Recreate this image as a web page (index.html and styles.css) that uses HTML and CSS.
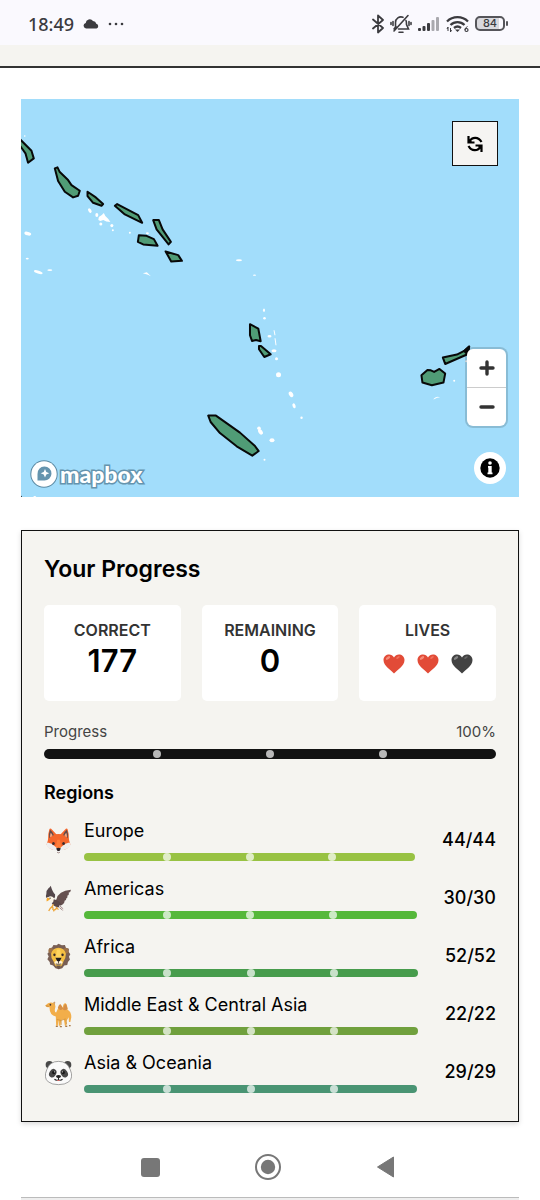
FILE: index.html
```html
<!DOCTYPE html>
<html lang="en">
<head>
    <meta charset="UTF-8">
    <meta name="viewport" content="width=device-width, initial-scale=1.0">
    <title>Your Progress</title>
    <link rel="stylesheet" href="styles.css">
</head>
<body>
    <div class="status-bar">
        <div class="status-left">
            <span class="time">18:49</span>
            <svg width="16" height="10" viewBox="0 0 16 10" fill="#3b3b3f"><path d="M3 9.500a2.800 2.800 0 0 1-.3-5.500A4 4 0 0 1 10 2a3.500 3.500 0 0 1 3.300 2.700A2.500 2.500 0 0 1 13.500 9.500z"/></svg>
            <svg width="16" height="4" viewBox="0 0 16 4" fill="#3b3b3f"><circle cx="2" cy="2" r="1.300"/><circle cx="8" cy="2" r="1.300"/><circle cx="14" cy="2" r="1.300"/></svg>
        </div>
        <div class="status-right">
            <svg width="12" height="20" viewBox="0 0 12 20" fill="none" stroke="#3b3b3f" stroke-width="1.800" stroke-linejoin="round" stroke-linecap="round"><path d="M1 5.500l10 8.500-5 4.500V1.500L11 6 1 14.500"/></svg>
            <svg width="22" height="20" viewBox="0 0 22 20" fill="none" stroke="#3b3b3f" stroke-width="1.600" stroke-linecap="round">
                <path d="M5.500 14V8.500A5.500 5.500 0 0 1 13 3.300M16 6.500c.5 1 .5 2.500.5 4l2 4.500H8.500M4 15l2-2.500M18 1.500L4 17M9 18.300h4M3 7.500v4M1 8.500v2M19 7.500v4M21 8.500v2"/>
            </svg>
            <svg width="22" height="16" viewBox="0 0 22 16" fill="#3b3b3f">
                <rect x="0" y="12" width="3" height="3" rx="1"/>
                <rect x="4.500" y="10" width="3" height="5" rx="1"/>
                <rect x="9" y="7" width="3" height="8" rx="1"/>
                <rect x="13.500" y="4" width="3" height="11" rx="1" fill="#a9a9ae"/>
                <rect x="18" y="1" width="3" height="14" rx="1" fill="#a9a9ae"/>
            </svg>
            <svg width="23" height="18" viewBox="0 0 23 18" fill="none" stroke="#3b3b3f" stroke-width="2.300">
                <path d="M1 6.500a15 15 0 0 1 21 0M4.500 10a10 10 0 0 1 14 0M8 13a5.500 5.500 0 0 1 7 0"/>
                <path d="M9 14.500h5L11.500 17z" fill="#3b3b3f" stroke="none"/>
                <path d="M2 12v4M4.500 13v4M1 14l1-2M5.500 15l-1 2M21.500 11.500c-2 1-2.500 2.500-2.500 3.500" stroke-width="1"/>
                <circle cx="20.500" cy="15" r="1.500" stroke-width="1.200"/>
            </svg>
            <div class="battery"><span>84</span></div>
        </div>
    </div>
    <div class="header-strip"></div>

    <main class="page">
        <div class="map">
            <svg class="map-canvas" viewBox="21 99 498 398" preserveAspectRatio="xMidYMid slice">
                <g class="islet">
                    <ellipse cx="90" cy="210.500" rx="1.500" ry="2.500" transform="rotate(-30 90 210.500)"/>
                    <ellipse cx="97" cy="215" rx="1.500" ry="2"/>
                    <path d="M99 217l3-2 2-2 1.500 3 3 3 2 3-4-.5-3-1.500-3 1-2-1z"/>
                    <circle cx="101" cy="224" r="1.500"/><circle cx="112" cy="225.500" r="1.500"/><circle cx="113" cy="230" r="1"/>
                    <circle cx="130" cy="232.500" r="1"/><ellipse cx="147.500" cy="233" rx="1.500" ry="1"/>
                    <ellipse cx="28" cy="233.500" rx="3.500" ry="1.800" transform="rotate(15 28 233.500)"/>
                    <ellipse cx="27.500" cy="258.500" rx="1.500" ry=".8"/><circle cx="25" cy="136" r=".8"/>
                    <ellipse cx="38.500" cy="272" rx="4.500" ry="1.500" transform="rotate(18 38.500 272)"/>
                    <ellipse cx="50" cy="270" rx="2.500" ry=".8"/>
                    <path d="M143 273l4-1 4 4-3-1.500z"/>
                    <ellipse cx="239" cy="260" rx="3" ry="1"/><ellipse cx="254.500" cy="275" rx="1.500" ry=".7"/>
                    <ellipse cx="264" cy="310" rx="1" ry="1.800"/><circle cx="264.500" cy="318" r="1.300"/>
                    <ellipse cx="269.500" cy="336" rx="2" ry="1.300"/><path d="M274 330l1 5M275 338l1 7" stroke="#fff"/>
                    <ellipse cx="274" cy="350.500" rx="2.500" ry="1.500"/><circle cx="276.500" cy="358.500" r="1.500"/>
                    <circle cx="278.500" cy="374.500" r="2.500"/><ellipse cx="291" cy="394" rx="2" ry="3" transform="rotate(-30 291 394)"/>
                    <ellipse cx="294" cy="405.500" rx="1.500" ry="2.500" transform="rotate(-20 294 405.500)"/>
                    <circle cx="301.500" cy="417.500" r="1.200"/><circle cx="259" cy="428" r="1.800"/>
                    <ellipse cx="260.500" cy="431.500" rx="2" ry="3" transform="rotate(-35 260.500 431.500)"/>
                    <ellipse cx="272" cy="440" rx="2.500" ry="2"/><circle cx="264.500" cy="459.500" r="1"/>
                    <path d="M433 399q3-4 7-2-3 0-6 2z"/><circle cx="454" cy="380.500" r="1"/>
                    <circle cx="466" cy="361" r="1"/><circle cx="35" cy="497" r="1.500"/>
                </g>
                <g class="island">
                    <path d="M19 138l12.700 12.700 2.300 7.600-5.700 4.400-2.600-9.400L19 144z"/>
                    <path d="M55 168.300l2.700-1 2.300 4.700 8.300 8 3.400 5 8.300 5.700-1.700 5-5 1.600-8.300-5.600L58.300 181z"/>
                    <path d="M87.700 191.700l8.300 5.600 7.300 6.700-1.600 1.700-8.400-3-5.600-6.700z"/>
                    <path d="M115 205.700l2.300-1.700 21 11 4 7.700-17.300-8.400z"/>
                    <path d="M153.300 220h5.700l3.700 9.300 8.300 12.400-2.300 2.600-12-15z"/>
                    <path d="M139 235l7.700.7 7.300 3.300 3.700 6.700-14.400-1.400-5.300-2.600z"/>
                    <path d="M165.700 251.300l12.600 3.700 3.700 5.700-10.700.6z"/>
                    <path d="M250 324l8.300 4.300 2.400 12.700-4.700-1.300-4 1-2-5.700z"/>
                    <path d="M259 345.700h2l9.700 8.300-6.400 2.700-5.300-7.700z"/>
                    <path d="M208.300 415.300h7.700l24 17 15 13.400 3.700 5-6.400 4.600-15.600-9.300-16.700-13.300-9.300-11z"/>
                    <path d="M442.700 357.300l14-3 7.300-3.600 5-4.400-1.700 7.700-22.300 9.700z"/>
                    <path d="M464 350.700l5-4.400-1.700 7.700z" fill="#080808"/>
                    <path d="M421.300 375l6-5.300 3.400.3 3.300 1.700 5.300-3 5.700 4.600-1.700 9-11.600 2.700-9.400-2.700z"/>
                    <path d="M20 495l2 3h-2zM20 155v8z"/>
                </g>
            </svg>
            <button class="reset-btn" aria-label="Reset map">
                <svg width="18" height="18" viewBox="0 0 18 18" fill="none" stroke="#000" stroke-width="2.200">
                    <path d="M3.500 6.500C6 1.500 12.500 1.500 15.500 7M14.500 11.500C12 16.500 5.500 16.500 2.500 11"/>
                    <path d="M2.500 1v6.500H8.500M15.500 17v-6.500H9.500"/>
                    <path d="M2.500 3l4 4.500h-4zM15.500 15l-4-4.500h4z" fill="#000" stroke="none"/>
                </svg>
            </button>
            <div class="zoom-controls">
                <button class="zoom-btn" aria-label="Zoom in"><svg width="16" height="16" viewBox="0 0 16 16" stroke="#333" stroke-width="3.400" stroke-linecap="round"><path d="M8 2v12M2 8h12"/></svg></button>
                <button class="zoom-btn" aria-label="Zoom out"><svg width="16" height="16" viewBox="0 0 16 16" stroke="#333" stroke-width="3.400" stroke-linecap="round"><path d="M2 8h12"/></svg></button>
            </div>
            <button class="info-btn" aria-label="Map information">
                <svg width="20" height="20" viewBox="0 0 20 20"><circle cx="10" cy="10" r="9.700"/><circle cx="10" cy="5" r="1.800" fill="#fff"/><path d="M8 8h3.700v6.500h.8v1.800h-5v-1.800H8.300V9.800H8z" fill="#fff"/></svg>
            </button>
            <a class="map-logo" href="#">
                <svg width="28" height="28" viewBox="0 0 28 28"><circle cx="14" cy="14" r="12.700" fill="#fff" stroke="#5d8ba4" stroke-width="2"/><path d="M7.500 20.500V14a7 7 0 1 1 6.500 6.500z" fill="#6594ae"/><path d="M15 9l1.300 3 3 1.200-3 1.300-1.300 3-1.300-3-3-1.300 3-1.200z" fill="#fff"/></svg>
                <span>mapbox</span>
            </a>
        </div>

        <section class="progress-card">
            <h2>Your Progress</h2>
            <div class="stats">
                <div class="stat">
                    <div class="stat-label">CORRECT</div>
                    <div class="stat-value">177</div>
                </div>
                <div class="stat">
                    <div class="stat-label">REMAINING</div>
                    <div class="stat-value">0</div>
                </div>
                <div class="stat">
                    <div class="stat-label">LIVES</div>
                    <div class="lives">
                        <svg viewBox="0 0 22 20" fill="#e24b37"><path d="M11 19.500C8 16 .5 12 .5 6 .5 0 8.500-1.500 11 3.500 13.500-1.500 21.500 0 21.500 6c0 6-7.500 10-10.500 13.500z"/><ellipse cx="5" cy="4" rx="2.500" ry="1.300" fill="#f58a77" transform="rotate(-35 5 4)"/><ellipse cx="15" cy="3.500" rx="2" ry="1" fill="#f0705c" transform="rotate(-35 15 3.500)"/></svg>
                        <svg viewBox="0 0 22 20" fill="#e24b37"><path d="M11 19.500C8 16 .5 12 .5 6 .5 0 8.500-1.500 11 3.500 13.500-1.500 21.500 0 21.500 6c0 6-7.500 10-10.500 13.500z"/><ellipse cx="5" cy="4" rx="2.500" ry="1.300" fill="#f58a77" transform="rotate(-35 5 4)"/><ellipse cx="15" cy="3.500" rx="2" ry="1" fill="#f0705c" transform="rotate(-35 15 3.500)"/></svg>
                        <svg viewBox="0 0 22 20" fill="#424242"><path d="M11 19.500C8 16 .5 12 .5 6 .5 0 8.500-1.500 11 3.500 13.500-1.500 21.500 0 21.500 6c0 6-7.500 10-10.500 13.500z"/><ellipse cx="5" cy="4" rx="2.500" ry="1.300" fill="#858585" transform="rotate(-35 5 4)"/><ellipse cx="15" cy="3.500" rx="2" ry="1" fill="#666" transform="rotate(-35 15 3.500)"/></svg>
                    </div>
                </div>
            </div>

            <div class="progress-head"><span>Progress</span><span>100%</span></div>
            <div class="bar bar-total" role="progressbar" aria-label="Progress" aria-valuenow="100"><i></i><i></i><i></i></div>

            <h3>Regions</h3>
            <div class="regions">
                <div class="region">
                    <svg class="animal" viewBox="0 0 80 80">
                        <path d="M13 7q2-6 8 1l14 15h10L59 8q6-7 8-1 5 15 4 32L58 58H22L9 39Q8 22 13 7z" fill="#f4662c"/>
                        <path d="M15 8q10 7 12 18L13 34q-3-14 2-26zM65 8q-10 7-12 18l14 8q3-14-2-26z" fill="#5d4a4c"/>
                        <path d="M17 17q5 4 6 11l-8 4q-1-8 2-15zM63 17q-5 4-6 11l8 4q1-8-2-15z" fill="#f0a37e"/>
                        <path d="M9 38q14-17 31-17t31 17l4 13q-5 14-22 17H27Q10 65 5 51z" fill="#f4662c"/>
                        <path d="M8 46q12 1 22 12l8 5h4l8-5q10-11 22-12 7 7 2 11-11 12-26 12l-8 6-8-6Q17 69 6 57q-5-4 2-11z" fill="#eee"/>
                        <path d="M36 38h8l4 22-8 5-8-5z" fill="#ff7b38"/>
                        <ellipse cx="25" cy="49" rx="4" ry="4.500" fill="#3b2a2c"/><ellipse cx="55" cy="49" rx="4" ry="4.500" fill="#3b2a2c"/>
                        <path d="M33 64q7-5 14 0l-4 7h-6z" fill="#292022"/><path d="M36 75q4 3 8 0" stroke="#755" stroke-width="2" fill="none"/>
                    </svg>
                    <div class="region-main">
                        <div class="region-name">Europe</div>
                        <div class="bar europe" role="progressbar" aria-label="Europe" aria-valuenow="100"><i></i><i></i><i></i></div>
                    </div>
                    <div class="region-count">44/44</div>
                </div>
                <div class="region">
                    <svg class="animal" viewBox="0 0 80 80">
                        <path d="M34 42q5-24 43-28-1 8-7 9 3 6-4 9 3 5-3 8 1 5-5 7 0 9-9 13L26 54z" fill="#66504f"/>
                        <path d="M17 2q-3 6-6 7-8 7-7 18-2 5-1 11 14-6 24 2 4-5 3-12-8-8-13-26z" fill="#54474b"/>
                        <path d="M9 36q10-6 18 3 3 9 0 17-9-5-14-9l-9-3q0-5 5-8z" fill="#fbf4e6"/>
                        <path d="M9 37q-6 1-4 12l5-3 5-4z" fill="#f7a82c"/><circle cx="15" cy="39" r="2" fill="#333"/>
                        <path d="M26 42q15 3 22 14-2 9-9 11-15-5-19-13 6-4 6-12z" fill="#5b4748"/>
                        <path d="M25 57q-3 8-10 13l-4 7M22 64q3 5 1 10M35 65q-1 8-8 9l-2 4M34 67l6 6" fill="none" stroke="#eea73c" stroke-width="4"/>
                        <path d="M42 59l13 10 1 8-14-8z" fill="#eee4df"/><path d="M43 61l10 9M43 67l9 8" stroke="#80696b" stroke-width="2"/>
                    </svg>
                    <div class="region-main">
                        <div class="region-name">Americas</div>
                        <div class="bar americas" role="progressbar" aria-label="Americas" aria-valuenow="100"><i></i><i></i><i></i></div>
                    </div>
                    <div class="region-count">30/30</div>
                </div>
                <div class="region">
                    <svg class="animal" viewBox="0 0 80 80">
                        <path d="M40 2l10 5 9-1 3 8 9 3-1 9 5 7-4 8 3 8-6 7-2 9-9 2-6 8-10 3-10-3-7-8-9-3-1-8-7-8 4-8-4-8 6-7-1-9 9-3 4-7 9 1z" fill="#795f54"/>
                        <circle cx="18" cy="23" r="8" fill="#9e7248"/><circle cx="62" cy="23" r="8" fill="#9e7248"/>
                        <path d="M40 14q17 0 22 18 0 12-7 22l-5 13q-10 8-20 0l-5-13q-8-10-7-22 5-18 22-18z" fill="#f4bf42"/>
                        <path d="M35 19h10l3 29H32z" fill="#ffd55f"/>
                        <ellipse cx="28" cy="35" rx="3.500" ry="4" fill="#35292a"/><ellipse cx="52" cy="35" rx="3.500" ry="4" fill="#35292a"/>
                        <path d="M28 56q12-12 24 0-1 9-12 9T28 56z" fill="#fff1d5"/>
                        <path d="M31 44h18l-4 8-5 4-5-4z" fill="#211d20"/><path d="M40 55v6M32 62q8 3 16 0" stroke="#493930" stroke-width="2.500" fill="none"/>
                        <path d="M33 67h14l-7 11z" fill="#6b554b"/>
                    </svg>
                    <div class="region-main">
                        <div class="region-name">Africa</div>
                        <div class="bar africa" role="progressbar" aria-label="Africa" aria-valuenow="100"><i></i><i></i><i></i></div>
                    </div>
                    <div class="region-count">52/52</div>
                </div>
                <div class="region">
                    <svg class="animal" viewBox="0 0 80 80">
                        <path d="M1 13Q12 1 25 6q8 4 5 15-3 12 3 13 4-9 7-15 2-10 7-7 2 4 5 8 3-15 9-13 5 3 6 19 11 6 11 22l-3 14h-4l-1-14q-4 8-7 11l1 14h-5l-3-18-8 1-2 17h-5l-1-18-2 18h-5l-1-27q-18-2-19-28-8 2-12-5z" fill="#f2ae4a"/>
                        <path d="M38 20q6-17 11-6l5 9q4-17 9-13l4 13q-8 9-15 1-7 7-14-4z" fill="#d58e48"/>
                        <path d="M35 55q13 6 26-2M48 57v14M62 55l2 14" stroke="#c88a36" stroke-width="2" fill="none"/>
                        <path d="M32 75h6M44 76h6M60 75h6M71 73h5" stroke="#a77848" stroke-width="4"/>
                        <ellipse cx="16" cy="11" rx="2.500" ry="3" fill="#443531"/><path d="M2 14l9 2M24 6l5-3-1 7" stroke="#b97831" stroke-width="2" fill="none"/>
                    </svg>
                    <div class="region-main">
                        <div class="region-name">Middle East &amp; Central Asia</div>
                        <div class="bar middle-east" role="progressbar" aria-label="Middle East &amp; Central Asia" aria-valuenow="100"><i></i><i></i><i></i></div>
                    </div>
                    <div class="region-count">22/22</div>
                </div>
                <div class="region">
                    <svg class="animal" viewBox="0 0 80 80">
                        <circle cx="13" cy="17" r="11" fill="#484848"/><circle cx="67" cy="17" r="11" fill="#484848"/>
                        <path d="M40 7q26 0 35 25 10 24-5 36-11 8-30 8t-30-8Q-5 56 5 32 14 7 40 7z" fill="#fafafa" stroke="#777" stroke-width="2"/>
                        <ellipse cx="23" cy="42" rx="10" ry="13" fill="#484848" transform="rotate(32 23 42)"/>
                        <ellipse cx="57" cy="42" rx="10" ry="13" fill="#484848" transform="rotate(-32 57 42)"/>
                        <circle cx="26" cy="40" r="5" fill="#181818"/><circle cx="54" cy="40" r="5" fill="#181818"/>
                        <circle cx="28" cy="38" r="1.800" fill="#ddd"/><circle cx="52" cy="38" r="1.800" fill="#ddd"/>
                        <path d="M32 50q8-5 16 0-1 6-8 7-7-1-8-7z" fill="#252525"/>
                        <path d="M40 55v6M28 60q6 5 12 1 6 4 12-1" fill="none" stroke="#252525" stroke-width="3"/><path d="M36 63h8q-4 5-8 0z" fill="#e7433c"/>
                    </svg>
                    <div class="region-main">
                        <div class="region-name">Asia &amp; Oceania</div>
                        <div class="bar asia" role="progressbar" aria-label="Asia &amp; Oceania" aria-valuenow="100"><i></i><i></i><i></i></div>
                    </div>
                    <div class="region-count">29/29</div>
                </div>
            </div>
        </section>
    </main>

    <nav class="phone-nav">
        <button aria-label="Recent apps"><svg width="20" height="20" viewBox="0 0 20 20"><rect x="1" y="1" width="19" height="19" rx="3" fill="#777"/></svg></button>
        <button aria-label="Home"><svg width="26" height="26" viewBox="0 0 26 26"><circle cx="13" cy="13" r="12" fill="none" stroke="#777" stroke-width="2"/><circle cx="13" cy="13" r="7.200" fill="#777"/></svg></button>
        <button aria-label="Back"><svg width="20" height="22" viewBox="0 0 20 22"><path d="M1.500 11L17.500 1v20z" fill="#777" stroke="#777" stroke-linejoin="round"/></svg></button>
    </nav>
    <div class="next-card"></div>
</body>
</html>
```
FILE: styles.css
```css
* {
    box-sizing: border-box;
}
body {
    margin: 0;
    background-color: #fff;
    color: #000;
    font-family: Inter, "Liberation Sans", sans-serif;
}
button {
    border: none;
    padding: 0;
    display: flex;
    align-items: center;
    justify-content: center;
    background: none;
    cursor: pointer;
}
svg {
    display: block;
}

/* phone status bar */
.status-bar {
    height: 45px;
    padding: 2px 35px 0 28px;
    display: flex;
    justify-content: space-between;
    align-items: center;
    background-color: #faf9fe;
    color: #3b3b3f;
}
.status-left {
    display: flex;
    align-items: center;
    gap: 9px;
}
.time {
    font-family: "Noto Sans", sans-serif;
    font-size: 18px;
    font-weight: 500;
    line-height: 24px;
}
.status-right {
    display: flex;
    align-items: center;
    gap: 6px;
}
.battery {
    position: relative;
    width: 30px;
    height: 15px;
    border: 2px solid #55555a;
    border-radius: 5px;
    background: linear-gradient(to right, #d9d9de 84%, #faf9fe 84%);
    font-size: 11px;
    font-weight: 500;
    line-height: 11px;
    text-align: center;
}
.battery::after {
    content: "";
    position: absolute;
    right: -5px;
    top: 3px;
    width: 2px;
    height: 5px;
    border-radius: 1px;
    background-color: #55555a;
}
.header-strip {
    height: 23px;
    background-color: #f5f4f0;
    border-bottom: 2px solid #333;
}

.page {
    padding: 31px 21px 0;
}

/* map */
.map {
    position: relative;
    aspect-ratio: 5 / 4;
    margin-bottom: 33px;
    overflow: hidden;
    background-color: #a2ddfb;
}
.map-canvas {
    width: 100%;
    height: 100%;
}
.islet {
    fill: #fff;
}
.island {
    fill: #509c76;
    stroke: #080808;
    stroke-width: 2;
    stroke-linejoin: round;
}
.reset-btn {
    position: absolute;
    top: 22px;
    right: 21px;
    width: 46px;
    height: 45px;
    border: 1px solid #111;
    background-color: #f5f4f2;
}
.zoom-controls {
    position: absolute;
    right: 13px;
    bottom: 71px;
    width: 39px;
    border-radius: 6px;
    background-color: #fff;
    box-shadow: 0 0 0 2px rgba(0, 0, 0, 0.15);
}
.zoom-btn {
    width: 100%;
    height: 38px;
}
.zoom-btn + .zoom-btn {
    height: 39px;
    border-top: 1px solid #ccc;
}
.info-btn {
    position: absolute;
    right: 13px;
    bottom: 13px;
    width: 32px;
    height: 32px;
    border-radius: 50%;
    background-color: #fff;
}
.map-logo {
    position: absolute;
    left: 9px;
    bottom: 9px;
    display: flex;
    align-items: center;
    gap: 2px;
    color: #fff;
    text-decoration: none;
    font-family: Lato, sans-serif;
    font-size: 23px;
    font-weight: 900;
    line-height: 28px;
    -webkit-text-stroke: 3px #6594ae;
    paint-order: stroke fill;
}

/* progress card */
.progress-card {
    padding: 22px 22px 28px;
    border: 1px solid #111;
    background-color: #f5f4f0;
    box-shadow: 0 2px 5px rgba(0, 0, 0, 0.15);
}
h2 {
    margin: 0 0 20px;
    font-size: 23px;
    font-weight: 600;
    line-height: 32px;
}
.stats {
    display: grid;
    grid-template-columns: repeat(3, 1fr);
    gap: 21px;
}
.stat {
    height: 96px;
    padding-top: 14px;
    border-radius: 5px;
    background-color: #fff;
    text-align: center;
}
.stat-label {
    color: #333;
    font-size: 16px;
    font-weight: 600;
    line-height: 22px;
}
.stat-value {
    font-size: 31px;
    font-weight: 600;
    line-height: 40px;
}
.lives {
    display: flex;
    justify-content: center;
    gap: 12px;
    padding-top: 13px;
}
.lives svg {
    width: 22px;
    height: 20px;
}
.progress-head {
    display: flex;
    justify-content: space-between;
    margin: 20px 0 7px;
    color: #444;
    font-size: 15px;
    line-height: 21px;
}
.bar {
    display: flex;
    justify-content: space-evenly;
    align-items: center;
    height: 8px;
    border-radius: 5px;
}
/* negative margins keep the dots centred on 25, 50 and 75% */
.bar i {
    width: 8px;
    height: 8px;
    margin: 0 -4px;
    border-radius: 50%;
    background-color: rgba(255, 255, 255, 0.7);
}
.bar-total {
    height: 10px;
    background-color: #121212;
}
h3 {
    margin: 22px 0 14px;
    font-size: 18px;
    font-weight: 600;
    line-height: 24px;
}
.regions {
    display: flex;
    flex-direction: column;
    gap: 16px;
}
.region {
    display: flex;
    align-items: center;
}
.animal {
    width: 27px;
    height: 27px;
    margin: 0 12px 0 1px;
}
.region-main {
    flex: 1;
}
.region-name {
    margin-bottom: 11px;
    font-size: 18px;
    line-height: 23px;
}
.region-count {
    margin-left: 27px;
    font-size: 18px;
    font-weight: 500;
    line-height: 24px;
}
.europe { background-color: #98c243; }
.americas { background-color: #55b83a; }
.africa { background-color: #479c4c; }
.middle-east { background-color: #70a03d; }
.asia { background-color: #499473; }

/* phone navigation */
.phone-nav {
    display: flex;
    justify-content: center;
    align-items: center;
    gap: 95px;
    height: 75px;
    padding: 15px 4px 0 0;
}
.next-card {
    height: 4px;
    margin: 0 21px;
    border-top: 1px solid #bbb;
    background-color: #eee;
}
```
